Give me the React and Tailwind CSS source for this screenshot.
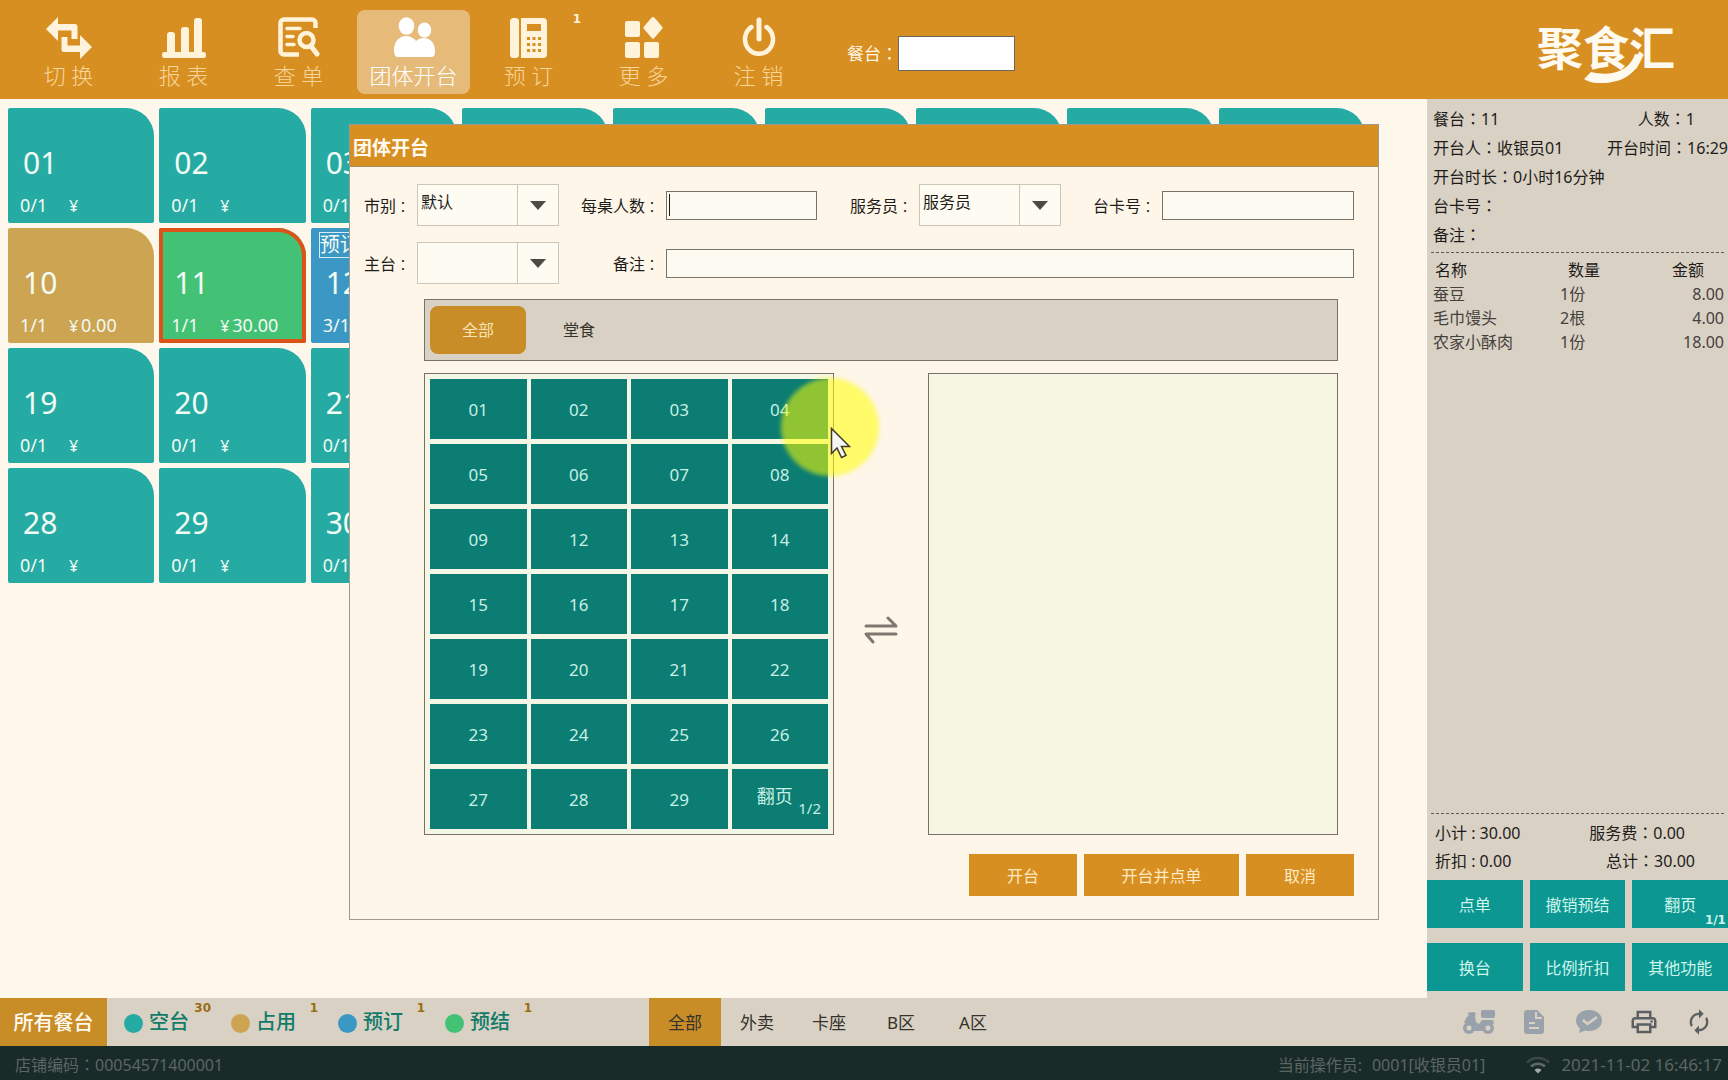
import React, { useState } from "react";
import clsx from "clsx";
import { MdAutorenew, MdOutlinePrint } from "react-icons/md";

/* ---------- icons ---------- */

const SwitchIcon = () => (
  <svg width="46" height="42" viewBox="0 0 46 42" fill="currentColor">
    <path d="M0 12 12 0v7h17a2.500 2.500 0 0 1 2.500 2.500V22h-6v-8.500H12V24z" />
    <path d="M46 30 34 42v-7H18a2.500 2.500 0 0 1-2.500-2.500V20h6v8.500H34V18z" />
  </svg>
);

const ReportIcon = () => (
  <svg width="44" height="42" viewBox="0 0 44 42" fill="currentColor">
    <rect x="5" y="15" width="8" height="23" rx="3" />
    <rect x="19" y="10" width="8" height="28" rx="3" />
    <rect x="32" y="1" width="8" height="37" rx="3" />
    <rect x="0" y="35" width="44" height="6" rx="2.500" />
  </svg>
);

const SearchListIcon = () => (
  <svg width="42" height="42" viewBox="0 0 42 42" fill="none" stroke="currentColor">
    <path d="M21 37.500H6A3.500 3.500 0 0 1 2.500 34V6A3.500 3.500 0 0 1 6 2.500h28A3.500 3.500 0 0 1 37.500 6v5" strokeWidth="4.500" />
    <path d="M9 11.500h13M9 19.500h6M9 27.500h7" strokeWidth="3.500" strokeLinecap="round" />
    <circle cx="28.500" cy="23" r="7" strokeWidth="4.500" />
    <path d="m33 29 6 8" strokeWidth="5" strokeLinecap="round" />
  </svg>
);

const GroupIcon = () => (
  <svg width="42" height="42" viewBox="0 0 42 42" fill="currentColor">
    <ellipse cx="13.500" cy="9" rx="7.800" ry="8.800" />
    <ellipse cx="31.500" cy="13" rx="6.800" ry="7.500" />
    <path d="M1 33c0-8 5-14 12-14 4 0 8 2 10 5 2-2 5-3 8-3 6 0 11 5 11 13 0 4-1 6-4 6H5c-3 0-4-3-4-7z" />
  </svg>
);

const PhoneIcon = () => (
  <svg width="38" height="42" viewBox="0 0 38 42" fill="currentColor">
    <rect x="0" y="1" width="9" height="40" rx="3.500" />
    <path
      fillRule="evenodd"
      d="M11 1h22a4 4 0 0 1 4 4v32a4 4 0 0 1-4 4H11zM17 7v7h14V7zM17 20v3h3v-3zm5.500 0v3h3v-3zm5.500 0v3h3v-3zM17 26v3h3v-3zm5.500 0v3h3v-3zm5.500 0v3h3v-3zM17 32v3h3v-3zm5.500 0v3h3v-3zm5.500 0v3h3v-3z"
    />
  </svg>
);

const MoreIcon = () => (
  <svg width="38" height="42" viewBox="0 0 38 42" fill="currentColor">
    <rect x="0" y="4" width="15" height="16" rx="2" />
    <rect x="0" y="25" width="15" height="16" rx="2" />
    <rect x="19" y="25" width="15" height="16" rx="2" />
    <path d="M26.500.800a2 2 0 0 1 3 0l7.500 8.700a2 2 0 0 1 0 2.600l-7.500 8.700a2 2 0 0 1-3 0L19 12.100a2 2 0 0 1 0-2.600z" />
  </svg>
);

const PowerIcon = () => (
  <svg width="34" height="42" viewBox="0 0 34 42" fill="none" stroke="currentColor" strokeLinecap="round">
    <path d="M9.500 10a14 14.500 0 1 0 15 0" strokeWidth="4.500" />
    <path d="M17 3v19" strokeWidth="5" />
  </svg>
);

const ScooterIcon = () => (
  <svg width="34" height="26" viewBox="0 0 34 26" fill="currentColor">
    <rect x="19" y="1" width="14" height="8" rx="2" />
    <path d="M5 4l6-1 3 1-1 3 1 6 3 2 3-4h11l1 3-2 2-4 1-6 5h-8l-3-4-6-4-1-1 3-5 2-2z" />
    <circle cx="7" cy="19" r="6" />
    <circle cx="26" cy="19" r="6" />
    <circle cx="7" cy="19" r="2.500" fill="#d9d1c4" />
    <circle cx="26" cy="19" r="2.500" fill="#d9d1c4" />
  </svg>
);

const BillIcon = () => (
  <svg width="22" height="26" viewBox="0 0 22 26">
    <path d="M4 1h10l7 7v14a3 3 0 0 1-3 3H4a3 3 0 0 1-3-3V4a3 3 0 0 1 3-3z" fill="currentColor" />
    <path d="M13 3v6h6M6 14h6M6 19h10" fill="none" stroke="#d9d1c4" strokeWidth="2" />
  </svg>
);

const MessageIcon = () => (
  <svg width="28" height="26" viewBox="0 0 28 26">
    <path d="M14 1c7.500 0 13 4.500 13 10.500S21.500 22 14 22c-1.500 0-3 0-4-.500L4 24l1-4.500c-2.500-2-4-5-4-8C1 5.500 6.500 1 14 1z" fill="currentColor" />
    <path d="m8 11 4.500 4L22 8" fill="none" stroke="#d9d1c4" strokeWidth="2.500" />
  </svg>
);

const WifiIcon = () => (
  <svg width="26" height="20" viewBox="0 0 26 20" fill="none" strokeWidth="2.500">
    <path d="M2 7.500a16 16 0 0 1 22 0" stroke="#3c4a47" />
    <path d="M6 11.500a10 10 0 0 1 14 0" stroke="#5d6764" />
    <path d="M9.500 15a5 5 0 0 1 7 0L13 18.500z" fill="#a3a9a6" stroke="none" />
  </svg>
);

const SwapIcon = () => (
  <svg width="34" height="28" viewBox="0 0 34 28" fill="none" stroke="#7d7871" strokeWidth="3" strokeLinecap="round" strokeLinejoin="round">
    <path d="M2 10h30l-8-8" />
    <path d="M32 18H2l7 8" />
  </svg>
);

const Logo = () => (
  <svg width="146" height="66" viewBox="0 0 146 66" fill="#fffaf0" role="img" aria-label="聚食汇" className="overflow-visible">
    <text x="0" y="43" fontSize="46" className="font-['Noto_Sans_CJK_SC',sans-serif] font-bold">
      聚食汇
    </text>
    <path d="M47 57l7-7c20 5 39-1 44-18l7 1c-5 20-22 29-44 28-6 0-11-2-14-4z" />
  </svg>
);

/* ---------- data ---------- */

const MENU = [
  { label: "切 换", icon: SwitchIcon },
  { label: "报 表", icon: ReportIcon },
  { label: "查 单", icon: SearchListIcon },
  { label: "团体开台", icon: GroupIcon, active: true },
  { label: "预 订", icon: PhoneIcon, badge: 1 },
  { label: "更 多", icon: MoreIcon },
  { label: "注 销", icon: PowerIcon },
];

const SPECIAL = {
  10: { seats: "1/1", amount: "0.00", color: "bg-[#cda452]" },
  11: { seats: "1/1", amount: "30.00", color: "bg-[#43c276]", selected: true },
  12: { seats: "3/1", amount: "", color: "bg-[#3b97c4]", tag: "预订" },
};

const TABLES = Array.from({ length: 33 }, (_, i) => {
  const no = i + 1;
  return {
    no: String(no).padStart(2, "0"),
    seats: "0/1",
    amount: "",
    color: "bg-[#26aba4]",
    ...SPECIAL[no],
  };
});

// tables that are free to be picked, first page
const FREE_TABLES = TABLES.filter((t) => !SPECIAL[Number(t.no)] || t.no === "12")
  .slice(0, 27)
  .map((t) => t.no);

const STATUSES = [
  { label: "空台", count: 30, color: "bg-[#26aba4]" },
  { label: "占用", count: 1, color: "bg-[#cda452]" },
  { label: "预订", count: 1, color: "bg-[#3b97c4]" },
  { label: "预结", count: 1, color: "bg-[#43c276]" },
];

const ZONES = ["全部", "外卖", "卡座", "B区", "A区"];

const DISHES = [
  { name: "蚕豆", qty: "1份", price: "8.00" },
  { name: "毛巾馒头", qty: "2根", price: "4.00" },
  { name: "农家小酥肉", qty: "1份", price: "18.00" },
];

const ACTIONS = [
  { label: "点单" },
  { label: "撤销预结" },
  { label: "翻页", page: "1/1" },
  { label: "换台" },
  { label: "比例折扣" },
  { label: "其他功能" },
];

/* ---------- small parts ---------- */

// full-width colon, centred in its cell
const Colon = ({ className }) => (
  <span className={clsx("font-['Noto_Sans_CJK_TC',sans-serif] leading-none", className)}>：</span>
);

const Field = ({ label, children }) => (
  <span className="whitespace-nowrap">
    {label}
    <Colon />
    {children}
  </span>
);

const FormLabel = ({ htmlFor, children }) => (
  <label htmlFor={htmlFor} className="pt-[2px] pr-[7px] text-right whitespace-nowrap">
    {children}
    <Colon className="text-sm" />
  </label>
);

const SelectBox = ({ id, options }) => (
  <div className="relative h-[42px] border border-[#cdc6b4] bg-[#fdfbf2]">
    <select id={id} className="h-full w-full appearance-none bg-transparent pb-[6px] pl-[3px] outline-none">
      {options.map((o) => (
        <option key={o}>{o}</option>
      ))}
    </select>
    <span className="pointer-events-none absolute inset-y-0 right-0 flex w-[41px] items-center justify-center border-l border-[#cdc6b4]">
      <svg width="16" height="9" viewBox="0 0 16 9" fill="#4d4a45">
        <path d="M0 0h16L8 9z" />
      </svg>
    </span>
  </div>
);

const TextBox = ({ id }) => (
  <input id={id} type="text" className="block h-[29px] w-full border border-[#77736a] bg-[#fdfaf2] px-1 outline-none" />
);

/* ---------- sections ---------- */

const TopBar = () => (
  <header className="flex h-[99px] items-start bg-[#d88f21] pt-[10px] pl-3">
    <nav className="flex gap-[2px]">
      {MENU.map(({ label, icon: Icon, active, badge }) => (
        <button
          key={label}
          type="button"
          className={clsx(
            "relative flex h-[84px] w-[113px] flex-col items-center rounded-lg pt-2",
            active ? "bg-[#e6bb7a] text-white" : "text-[#fff3dc]"
          )}
        >
          <span className="flex h-10 items-center">
            <Icon />
          </span>
          <span className={clsx("mt-[2px] text-[22px] leading-[30px] font-light", !active && "text-[#f8d59a]")}>
            {label}
          </span>
          {badge && (
            <span className="absolute top-px right-1 font-['DejaVu_Sans',sans-serif] text-xs font-bold text-[#fff3dc]">
              {badge}
            </span>
          )}
        </button>
      ))}
    </nav>
    <div className="ml-8 flex items-center pt-[26px] text-[#fff6e2]">
      <label htmlFor="table-no" className="text-[17px]">
        餐台
        <Colon />
      </label>
      <input id="table-no" type="text" className="h-[35px] w-[117px] border border-[#6d675c] bg-white px-1 outline-none" />
    </div>
    <div className="mr-[45px] ml-auto pt-3">
      <Logo />
    </div>
  </header>
);

const TableTile = ({ table }) => (
  <button
    type="button"
    className={clsx(
      "relative h-[115px] rounded-xs rounded-tr-[28px] text-left text-[#f2fbf4]",
      table.color,
      table.selected && "inset-ring-4 inset-ring-[#dd5216]"
    )}
  >
    {table.tag && (
      <span className="absolute top-1 left-2 border border-[#d5ebf5] text-xl leading-6">{table.tag}</span>
    )}
    <span className="block pt-[31px] pl-[15px] text-3xl leading-10">{table.no}</span>
    <span className="flex items-baseline pt-2 pl-3 text-lg leading-7">
      <span className="w-[49px]">{table.seats}</span>
      <span className="w-3 text-base">¥</span>
      {table.amount}
    </span>
  </button>
);

const OrderPanel = () => (
  <aside className="flex w-[301px] shrink-0 flex-col overflow-hidden bg-[#d9d1c4] text-base text-[#1d1c1a]">
    <div className="pt-[6px] pl-[6px] leading-[29px]">
      <div className="flex justify-between pr-[33px]">
        <Field label="餐台">11</Field>
        <Field label="人数">1</Field>
      </div>
      <div className="flex justify-between">
        <Field label="开台人">收银员01</Field>
        <Field label="开台时间">16:29</Field>
      </div>
      <div>
        <Field label="开台时长">0小时16分钟</Field>
      </div>
      <div>
        <Field label="台卡号" />
      </div>
      <div>
        <Field label="备注" />
      </div>
    </div>
    <div className="mx-1 mt-[2px] border-t border-dashed border-[#5f5a52]" />

    <table className="mt-[5px] w-full leading-6">
      <thead>
        <tr>
          <th className="pl-2 text-left font-normal">名称</th>
          <th className="w-[90px] pl-2 text-left font-normal">数量</th>
          <th className="w-[78px] pr-6 text-right font-normal">金额</th>
        </tr>
      </thead>
      <tbody className="text-[#45423d]">
        {DISHES.map((d) => (
          <tr key={d.name}>
            <td className="pl-[6px]">{d.name}</td>
            <td>{d.qty}</td>
            <td className="pr-1 text-right">{d.price}</td>
          </tr>
        ))}
      </tbody>
    </table>

    <div className="mx-1 mt-auto border-t border-dashed border-[#5f5a52]" />
    <div className="pt-[5px] pr-[33px] pb-[5px] pl-2 leading-7">
      <div className="flex justify-between">
        <span>小计 : 30.00</span>
        <span className="pr-[10px]">
          <Field label="服务费">0.00</Field>
        </span>
      </div>
      <div className="flex justify-between">
        <span>折扣 : 0.00</span>
        <Field label="总计">30.00</Field>
      </div>
    </div>
    <div className="mb-[7px] grid grid-cols-3 gap-x-[7px] gap-y-[15px]">
      {ACTIONS.map(({ label, page }) => (
        <button key={label} type="button" className="relative h-12 bg-[#0c9792] pt-[2px] text-[#cdf5ec]">
          {label}
          {page && (
            <span className="absolute right-[2px] bottom-0 font-['DejaVu_Sans',sans-serif] text-xs font-bold">{page}</span>
          )}
        </button>
      ))}
    </div>
  </aside>
);

const FilterBar = () => {
  const [zone, setZone] = useState("全部");

  return (
    <div className="flex h-12 bg-[#d9d1c4]">
      <button type="button" className="w-[107px] bg-[#c98d27] pt-[2px] text-xl font-medium text-[#fffaf0]">
        所有餐台
      </button>
      {STATUSES.map((s) => (
        <button
          key={s.label}
          type="button"
          className="relative flex w-[107px] items-center gap-[6px] pt-[2px] pl-[17px] text-xl font-medium text-[#127c6b]"
        >
          <span className={clsx("size-[19px] rounded-full", s.color)} />
          <span className="pb-[2px]">{s.label}</span>
          <span className="absolute top-[2px] right-[3px] font-['DejaVu_Sans',sans-serif] text-xs leading-4 font-bold text-[#9a6c14]">
            {s.count}
          </span>
        </button>
      ))}
      <div className="ml-[114px] flex">
        {ZONES.map((z) => (
          <button
            key={z}
            type="button"
            onClick={() => setZone(z)}
            className={clsx("w-[72px] pt-[2px] text-[17px] text-[#35322c]", z === zone && "bg-[#c98d27]")}
          >
            {z}
          </button>
        ))}
      </div>
      <div className="mr-[2px] ml-auto flex items-center text-[#99a2ab]">
        <button type="button" aria-label="外卖" className="flex w-[55px] justify-center"><ScooterIcon /></button>
        <button type="button" aria-label="账单" className="flex w-[55px] justify-center"><BillIcon /></button>
        <button type="button" aria-label="消息" className="flex w-[55px] justify-center"><MessageIcon /></button>
        <button type="button" aria-label="打印" className="flex w-[55px] justify-center text-[#5b5f63]">
          <MdOutlinePrint size={30} />
        </button>
        <button type="button" aria-label="刷新" className="flex w-[55px] justify-center text-[#5b5f63]">
          <MdAutorenew size={28} />
        </button>
      </div>
    </div>
  );
};

const StatusBar = () => (
  <footer className="flex h-[34px] items-center bg-[#192b28] px-[6px] pt-1 pl-[15px] text-base text-[#5c6663]">
    <Field label="店铺编码">00054571400001</Field>
    <span className="ml-auto">当前操作员:</span>
    <span className="ml-[10px]">0001[收银员01]</span>
    <span className="mr-[10px] ml-10">
      <WifiIcon />
    </span>
    <span className="text-[17px]">2021-11-02 16:46:17</span>
  </footer>
);

const GroupOpenDialog = () => (
  <section
    role="dialog"
    aria-labelledby="dialog-title"
    className="w-[1030px] max-w-full border border-[#a19a8c] bg-[#fef6e8] text-base text-[#1f1d1a]"
  >
    <h2
      id="dialog-title"
      className="h-[42px] border-b border-[#a08c62] bg-[#d88f21] pl-[3px] text-[19px] leading-[46px] font-bold text-[#fffaf0]"
    >
      团体开台
    </h2>

    <form>
      <div className="grid grid-cols-[67px_142px_107px_151px_102px_142px_101px_1fr] items-center gap-y-4 pt-[17px] pr-6">
        <FormLabel htmlFor="period">市别</FormLabel>
        <SelectBox id="period" options={["默认"]} />
        <FormLabel htmlFor="people">每桌人数</FormLabel>
        <div className="relative">
          <TextBox id="people" />
          <span className="absolute top-[3px] left-[3px] h-[22px] w-px bg-[#1f1d1a]" />
        </div>
        <FormLabel htmlFor="waiter">服务员</FormLabel>
        <SelectBox id="waiter" options={["服务员"]} />
        <FormLabel htmlFor="card">台卡号</FormLabel>
        <TextBox id="card" />

        <FormLabel htmlFor="main-table">主台</FormLabel>
        <SelectBox id="main-table" options={[""]} />
        <FormLabel htmlFor="remark">备注</FormLabel>
        <div className="col-span-5">
          <TextBox id="remark" />
        </div>
      </div>

      <div className="mt-[15px] mr-10 ml-[74px]">
        <div className="flex gap-[5px] border border-[#77716a] bg-[#d9d1c4] px-[5px] py-[6px]">
          <button type="button" className="h-12 w-24 rounded-lg bg-[#c98d27] text-[#f8e3b5]">全部</button>
          <button type="button" className="h-12 w-24 text-[#35322c]">堂食</button>
        </div>

        <div className="mt-3 grid grid-cols-[1fr_94px_1fr]">
          <div className="relative grid grid-cols-4 gap-x-1 gap-y-[5px] border border-[#77716a] bg-[#f5f7e6] p-[5px]">
            {FREE_TABLES.map((no) => (
              <button key={no} type="button" className="h-[60px] bg-[#0b7d72] pt-[2px] text-[17px] text-[#c8efe6]">
                {no}
              </button>
            ))}
            <button type="button" className="relative h-[60px] bg-[#0b7d72] pr-[10px] pb-[6px] text-lg text-[#c8efe6]">
              翻页
              <span className="absolute right-[7px] bottom-[11px] text-[15px] leading-5">1/2</span>
            </button>

            {/* mouse pointer with its click highlight */}
            <div className="pointer-events-none absolute top-1 left-[356px] size-[98px] rounded-full bg-[#ffff00]/55 blur-[2px]" />
            <svg className="pointer-events-none absolute top-[53px] left-[405px]" width="21" height="32" viewBox="0 0 21 32">
              <path
                d="M1.500 1.500v25l5.500-5.500 4.500 9.500 4.500-2-4.500-9h8z"
                fill="#f5f5f3"
                stroke="#3d3a2c"
                strokeWidth="1.500"
              />
            </svg>
          </div>
          <div className="flex items-center justify-center pt-[52px]">
            <button type="button" aria-label="移动">
              <SwapIcon />
            </button>
          </div>
          <div className="border border-[#77716a] bg-[#f7f6e3]" />
        </div>
      </div>

      <div className="mt-[19px] mr-6 mb-[23px] flex justify-end gap-[7px] text-[#fdeac2]">
        <button type="button" className="h-[42px] w-[108px] bg-[#d88f21] pt-[2px]">开台</button>
        <button type="button" className="h-[42px] w-[155px] bg-[#d88f21] pt-[2px]">开台并点单</button>
        <button type="button" className="h-[42px] w-[108px] bg-[#d88f21] pt-[2px]">取消</button>
      </div>
    </form>
  </section>
);

export default function App() {
  return (
    <div className="relative flex min-h-screen flex-col overflow-hidden bg-[#fef7eb] font-['Noto_Sans','Noto_Sans_CJK_SC',sans-serif]">
      <TopBar />
      <div className="flex flex-1">
        <main className="grid flex-1 grid-cols-9 content-start gap-[5px] pt-[9px] pr-[62px] pl-2">
          {TABLES.map((t) => (
            <TableTile key={t.no} table={t} />
          ))}
        </main>
        <OrderPanel />
      </div>
      <FilterBar />
      <StatusBar />

      <div className="absolute inset-x-0 top-[124px] flex justify-center">
        <GroupOpenDialog />
      </div>
    </div>
  );
}
